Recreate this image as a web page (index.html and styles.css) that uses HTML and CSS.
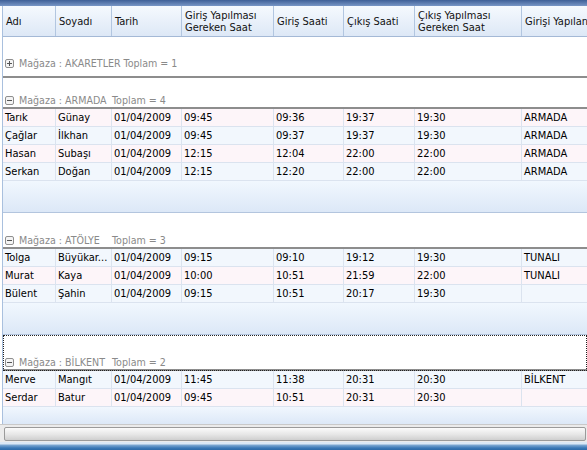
FILE: index.html
```html
<!DOCTYPE html>
<html lang="tr">
<head>
<meta charset="utf-8">
<link rel="stylesheet" href="styles.css">
</head>
<body>
<div class="topbar"></div>
<div class="grid">
  <div class="row hdr">
    <div class="hc">Adı</div>
    <div class="hc">Soyadı</div>
    <div class="hc">Tarih</div>
    <div class="hc">Giriş Yapılması<br>Gereken Saat</div>
    <div class="hc">Giriş Saati</div>
    <div class="hc">Çıkış Saati</div>
    <div class="hc">Çıkış Yapılması<br>Gereken Saat</div>
    <div class="hc">Girişi Yapılan Mağaza</div>
  </div>

  <div class="group g1">
    <svg class="tog" width="9" height="9" viewBox="0 0 9 9"><rect x="0.5" y="0.5" width="8" height="8" rx="1.5" fill="#f4f4f4" stroke="#8f8f8f"/><path d="M2 4.5h5M4.5 2v5" stroke="#555" stroke-width="1"/></svg>
    <span>Mağaza : <span class="gname">AKARETLER</span> Toplam = 1</span>
  </div>

  <div class="group g2">
    <svg class="tog" width="9" height="9" viewBox="0 0 9 9"><rect x="0.5" y="0.5" width="8" height="8" rx="1.5" fill="#f4f4f4" stroke="#8f8f8f"/><path d="M2 4.5h5" stroke="#555" stroke-width="1"/></svg>
    <span>Mağaza : <span class="gname">ARMADA</span> Toplam = 4</span>
  </div>
  <div class="row data pink"><div class="c">Tarık</div><div class="c">Günay</div><div class="c">01/04/2009</div><div class="c">09:45</div><div class="c">09:36</div><div class="c">19:37</div><div class="c">19:30</div><div class="c">ARMADA</div></div>
  <div class="row data blue"><div class="c">Çağlar</div><div class="c">İlkhan</div><div class="c">01/04/2009</div><div class="c">09:45</div><div class="c">09:37</div><div class="c">19:37</div><div class="c">19:30</div><div class="c">ARMADA</div></div>
  <div class="row data pink"><div class="c">Hasan</div><div class="c">Subaşı</div><div class="c">01/04/2009</div><div class="c">12:15</div><div class="c">12:04</div><div class="c">22:00</div><div class="c">22:00</div><div class="c">ARMADA</div></div>
  <div class="row data blue"><div class="c">Serkan</div><div class="c">Doğan</div><div class="c">01/04/2009</div><div class="c">12:15</div><div class="c">12:20</div><div class="c">22:00</div><div class="c">22:00</div><div class="c">ARMADA</div></div>
  <div class="footer"></div>

  <div class="group g3">
    <svg class="tog" width="9" height="9" viewBox="0 0 9 9"><rect x="0.5" y="0.5" width="8" height="8" rx="1.5" fill="#f4f4f4" stroke="#8f8f8f"/><path d="M2 4.5h5" stroke="#555" stroke-width="1"/></svg>
    <span>Mağaza : <span class="gname">ATÖLYE</span> Toplam = 3</span>
  </div>
  <div class="row data blue"><div class="c">Tolga</div><div class="c">Büyükar...</div><div class="c">01/04/2009</div><div class="c">09:15</div><div class="c">09:10</div><div class="c">19:12</div><div class="c">19:30</div><div class="c">TUNALI</div></div>
  <div class="row data pink"><div class="c">Murat</div><div class="c">Kaya</div><div class="c">01/04/2009</div><div class="c">10:00</div><div class="c">10:51</div><div class="c">21:59</div><div class="c">22:00</div><div class="c">TUNALI</div></div>
  <div class="row data blue"><div class="c">Bülent</div><div class="c">Şahin</div><div class="c">01/04/2009</div><div class="c">09:15</div><div class="c">10:51</div><div class="c">20:17</div><div class="c">19:30</div><div class="c"></div></div>
  <div class="footer"></div>

  <div class="group g3 focused">
    <svg class="tog" width="9" height="9" viewBox="0 0 9 9"><rect x="0.5" y="0.5" width="8" height="8" rx="1.5" fill="#f4f4f4" stroke="#8f8f8f"/><path d="M2 4.5h5" stroke="#555" stroke-width="1"/></svg>
    <span>Mağaza : <span class="gname">BİLKENT</span> Toplam = 2</span>
  </div>
  <div class="row data blue"><div class="c">Merve</div><div class="c">Mangıt</div><div class="c">01/04/2009</div><div class="c">11:45</div><div class="c">11:38</div><div class="c">20:31</div><div class="c">20:30</div><div class="c">BİLKENT</div></div>
  <div class="row data pink"><div class="c">Serdar</div><div class="c">Batur</div><div class="c">01/04/2009</div><div class="c">09:45</div><div class="c">10:51</div><div class="c">20:31</div><div class="c">20:30</div><div class="c"></div></div>
  <div class="footer last"></div>
</div>
<div class="scroll"><div class="thumb"></div></div>
<div class="bottombar"></div>
</body>
</html>
```
FILE: styles.css
```css
html, body {
  margin: 0;
  padding: 0;
  background: #fff;
  width: 587px;
  height: 450px;
  overflow: hidden;
}
body {
  font-family: "DejaVu Sans Condensed", "DejaVu Sans", sans-serif;
  font-stretch: condensed;
  font-size: 11px;
  color: #000;
}
.topbar {
  height: 6px;
  background: linear-gradient(#3e5f97, #7896c6);
}
.grid {
  margin-left: 2px;
  border-left: 1px solid #a9c0de;
  overflow: hidden;
}
.row {
  display: grid;
  grid-template-columns: 53px 56px 70px 92px 70px 71px 107px 140px;
  width: 609px;
}
.hdr {
  height: 30px;
  border-bottom: 1px solid #a4b9d6;
  background: linear-gradient(#f5f9fe, #dde8f6);
}
.hc {
  display: flex;
  align-items: center;
  padding-left: 3px;
  padding-top: 1px;
  line-height: 12px;
  border-right: 1px solid #b2c6e0;
  white-space: nowrap;
  overflow: hidden;
  color: #111;
}
.data {
  height: 17px;
  border-bottom: 1px solid #dbe3ef;
}
.data .c {
  padding-left: 2px;
  line-height: 18px;
  border-right: 1px solid #dbe3ef;
  white-space: nowrap;
  overflow: hidden;
}
.pink { background: #fdf5f9; }
.blue { background: #f2f7fd; }
.group {
  display: flex;
  align-items: flex-end;
  padding-left: 2px;
  border-bottom: 2px solid #8d8d8d;
  color: #8a8a8a;
  font-size: 10.6px;
  line-height: 13px;
  white-space: nowrap;
}
.group .tog {
  margin-right: 5px;
  margin-bottom: 2px;
  flex: none;
}
.group .gname {
  display: inline-block;
  min-width: 44px;
}
.g1 {
  height: 33px;
  padding-bottom: 6px;
}
.g2 {
  height: 29px;
  padding-bottom: 0;
}
.g3 {
  height: 34px;
  padding-bottom: 0;
}
.footer {
  height: 31px;
  border-bottom: 1px solid #b3c5de;
  background: linear-gradient(#f1f7fe, #dce8f7);
}
.focused {
  height: 34px;
  outline: 1px dotted #222;
  outline-offset: -1px;
}
.footer.last {
  height: 17px;
  border-bottom: 0;
}
.scroll {
  height: 18px;
  box-sizing: border-box;
  border-top: 1px solid #c9c9c9;
  background: #ebebeb;
  padding: 2px 0 1px 4px;
}
.thumb {
  height: 100%;
  margin-right: 1px;
  border: 1px solid #9a9a9a;
  border-radius: 2px;
  box-sizing: border-box;
  background: linear-gradient(#fbfbfb, #e6e6e6 55%, #cfcfcf);
}
.bottombar {
  height: 8px;
  background: linear-gradient(#dbe8f5 0, #dbe8f5 2px, #7fa9d3 3px, #3a78b6 6px, #2d6aa8);
}
```
